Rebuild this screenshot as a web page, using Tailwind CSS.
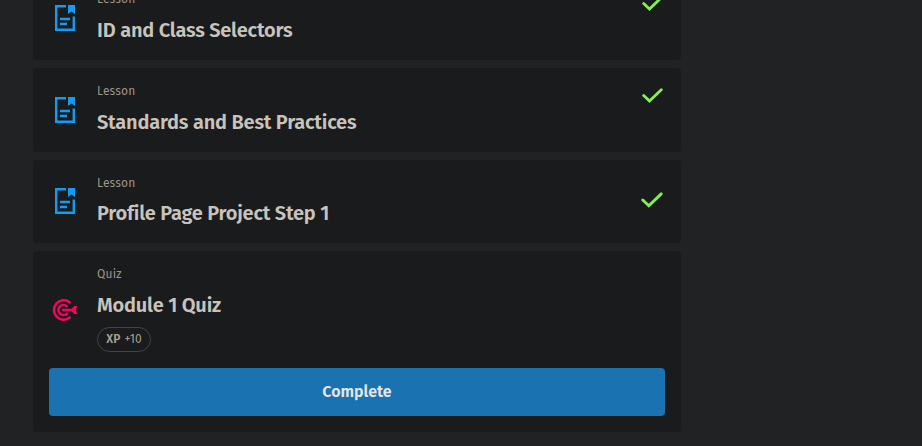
<!DOCTYPE html>
<html lang="en">
<head>
<meta charset="utf-8">
<title>Lessons</title>
<script src="https://cdn.jsdelivr.net/npm/@tailwindcss/browser@4"></script>
</head>
<body class="h-[446px] overflow-hidden bg-[#202223] font-['Fira_Sans','Noto_Sans',sans-serif] text-[#c8c3bc]">
<svg class="hidden">
  <symbol id="doc" viewBox="0 0 20 26">
    <path d="M11 1.200H1.200v23.600h17.600V11.500" fill="none" stroke="#149cf3" stroke-width="2.400"/>
    <path d="M13 0h7v9l-3.500-2.500L13 9z" fill="#149cf3"/>
    <path d="M5 14h10M5 19h7" fill="none" stroke="#149cf3" stroke-width="2.300"/>
  </symbol>
  <symbol id="check" viewBox="0 0 21 15">
    <path d="M1.700 7.500L7.500 13L19.300 1.700" fill="none" stroke="#83f052" stroke-width="2.800" stroke-linecap="round"/>
  </symbol>
</svg>
<main class="-mt-6 ml-[33px] flex w-[648px] flex-col gap-2">
  <section class="flex h-[84px] rounded bg-[#191b1c] px-4">
    <div class="flex w-8 items-center justify-center"><svg class="h-[26px] w-5"><use href="#doc"/></svg></div>
    <div class="ml-4 flex-1 pt-[13px]">
      <p class="h-5 text-[12px] leading-5 tracking-[0.2px] text-[#9d9488]">Lesson</p>
      <h2 class="mt-1.5 text-[20px] leading-[30px] font-semibold tracking-[-0.2px] whitespace-nowrap">ID and Class Selectors</h2>
    </div>
    <svg class="mt-5 mr-0.5 h-[15px] w-[21px]"><use href="#check"/></svg>
  </section>
  <section class="flex h-[84px] rounded bg-[#191b1c] px-4">
    <div class="flex w-8 items-center justify-center"><svg class="h-[26px] w-5"><use href="#doc"/></svg></div>
    <div class="ml-4 flex-1 pt-[13px]">
      <p class="h-5 text-[12px] leading-5 tracking-[0.2px] text-[#9d9488]">Lesson</p>
      <h2 class="mt-1.5 text-[20px] leading-[30px] font-semibold tracking-[-0.2px] whitespace-nowrap">Standards and Best Practices</h2>
    </div>
    <svg class="mt-5 mr-0.5 h-[15px] w-[21px]"><use href="#check"/></svg>
  </section>
  <section class="flex h-[83px] rounded bg-[#191b1c] px-4">
    <div class="flex w-8 items-start justify-center pt-7"><svg class="h-[26px] w-5"><use href="#doc"/></svg></div>
    <div class="ml-4 flex-1 pt-[13px]">
      <p class="h-5 text-[12px] leading-5 tracking-[0.2px] text-[#9d9488]">Lesson</p>
      <h2 class="mt-[5px] text-[20px] leading-[30px] font-semibold tracking-[-0.2px] whitespace-nowrap">Profile Page Project Step 1</h2>
    </div>
    <svg class="mt-8 mr-[2.500px] h-4 w-[22px]"><use href="#check"/></svg>
  </section>
  <section class="h-[181px] rounded bg-[#191b1c] px-4">
    <div class="flex h-[117px]">
      <div class="flex w-8 items-center pl-[3px]">
        <svg class="h-[24px] w-[26px]" viewBox="0 0 26 24" fill="none" stroke="#f5055e" stroke-width="2.500" stroke-linecap="round">
          <path d="M17.800 4.500A9.700 9.700 0 1 0 17.800 19.500"/>
          <path d="M14.800 8.300A5 5 0 1 0 14.800 15.700"/>
          <path d="M11 12h10"/>
          <path d="M18.500 12l3.700-4h3.300l-1.800 4 1.800 4h-3.300z" fill="#f5055e" stroke="none"/>
        </svg>
      </div>
      <div class="ml-4 flex flex-col items-start pt-[13px]">
        <p class="h-5 text-[12px] leading-5 tracking-[0.2px] text-[#9d9488]">Quiz</p>
        <h2 class="mt-1.5 text-[20px] leading-[30px] font-semibold tracking-[-0.2px] whitespace-nowrap">Module 1 Quiz</h2>
        <div class="mt-[7px] flex h-[25px] w-[54px] items-center justify-center gap-1 rounded-full border border-[#414548] pb-0.5 text-[12px] tracking-[0.1px] text-[#a79f94]"><b class="font-semibold">XP</b><span>+10</span></div>
      </div>
    </div>
    <button class="block h-12 w-full rounded bg-[#1b72b1] text-[16px] font-semibold text-[#e8e6e3]">Complete</button>
  </section>
</main>
</body>
</html>
